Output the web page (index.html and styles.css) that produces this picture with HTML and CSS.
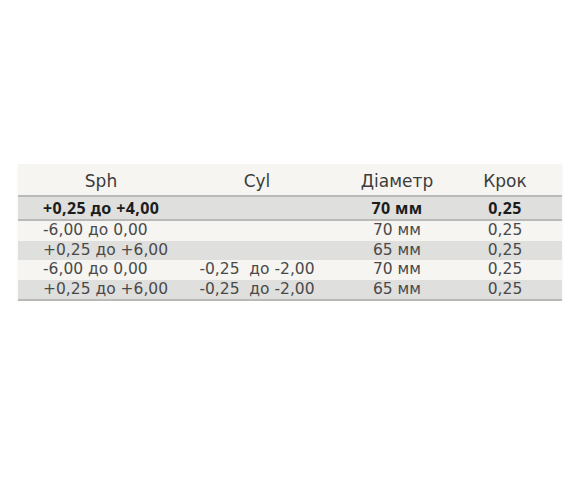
FILE: index.html
```html
<!DOCTYPE html>
<html lang="uk">
<head>
<meta charset="utf-8">
<link rel="stylesheet" href="styles.css">
</head>
<body>
<div class="page">
  <div class="table">
    <div class="row head">
      <div class="c c1 center">Sph</div>
      <div class="c c2">Cyl</div>
      <div class="c c3">Діаметр</div>
      <div class="c c4">Крок</div>
    </div>
    <div class="row bold">
      <div class="c c1">+0,25 до +4,00</div>
      <div class="c c2"></div>
      <div class="c c3">70 мм</div>
      <div class="c c4">0,25</div>
    </div>
    <div class="row light">
      <div class="c c1">-6,00 до 0,00</div>
      <div class="c c2"></div>
      <div class="c c3">70 мм</div>
      <div class="c c4">0,25</div>
    </div>
    <div class="row grey">
      <div class="c c1">+0,25 до +6,00</div>
      <div class="c c2"></div>
      <div class="c c3">65 мм</div>
      <div class="c c4">0,25</div>
    </div>
    <div class="row light">
      <div class="c c1">-6,00 до 0,00</div>
      <div class="c c2">-0,25&nbsp; до -2,00</div>
      <div class="c c3">70 мм</div>
      <div class="c c4">0,25</div>
    </div>
    <div class="row grey last">
      <div class="c c1">+0,25 до +6,00</div>
      <div class="c c2">-0,25&nbsp; до -2,00</div>
      <div class="c c3">65 мм</div>
      <div class="c c4">0,25</div>
    </div>
  </div>
</div>
</body>
</html>
```

FILE: styles.css
```css
html, body {
  margin: 0;
  padding: 0;
  background: #ffffff;
}
body {
  font-family: "DejaVu Sans", "Noto Sans", sans-serif;
  color: #4a4a4a;
}
.page {
  padding: 164px 18px 0 18px;
}
.table {
  width: 544px;
  background: #f6f5f1;
  box-shadow: 0 2px 3px rgba(0,0,0,0.06);
}
.row {
  display: grid;
  grid-template-columns: 166px 146px 134px 82px 16px;
  align-items: center;
  height: 19.5px;
  font-size: 15.5px;
  line-height: 19px;
}
.c { white-space: nowrap; text-align: center; }
.c1 { text-align: left; padding-left: 25px; }
.c1.center { text-align: center; padding-left: 0; }
.head {
  height: 33px;
  align-items: end;
  font-size: 17px;
  color: #3c3c3c;
  border-bottom: 2px solid #b9b9b7;
  box-sizing: border-box;
}
.head .c { padding-bottom: 4px; }
.bold {
  height: 24px;
  background: #dfdfdd;
  font-family: "Noto Sans", "DejaVu Sans", sans-serif;
  font-weight: bold;
  font-size: 16px;
  letter-spacing: 0.4px;
  color: #1c1c1c;
  border-bottom: 2px solid #b9b9b7;
  box-sizing: border-box;
}
.light { background: #f6f5f1; }
.grey { background: #dfdfdd; }
.last {
  border-bottom: 2px solid #b9b9b7;
  height: 21px;
  box-sizing: border-box;
}
```
